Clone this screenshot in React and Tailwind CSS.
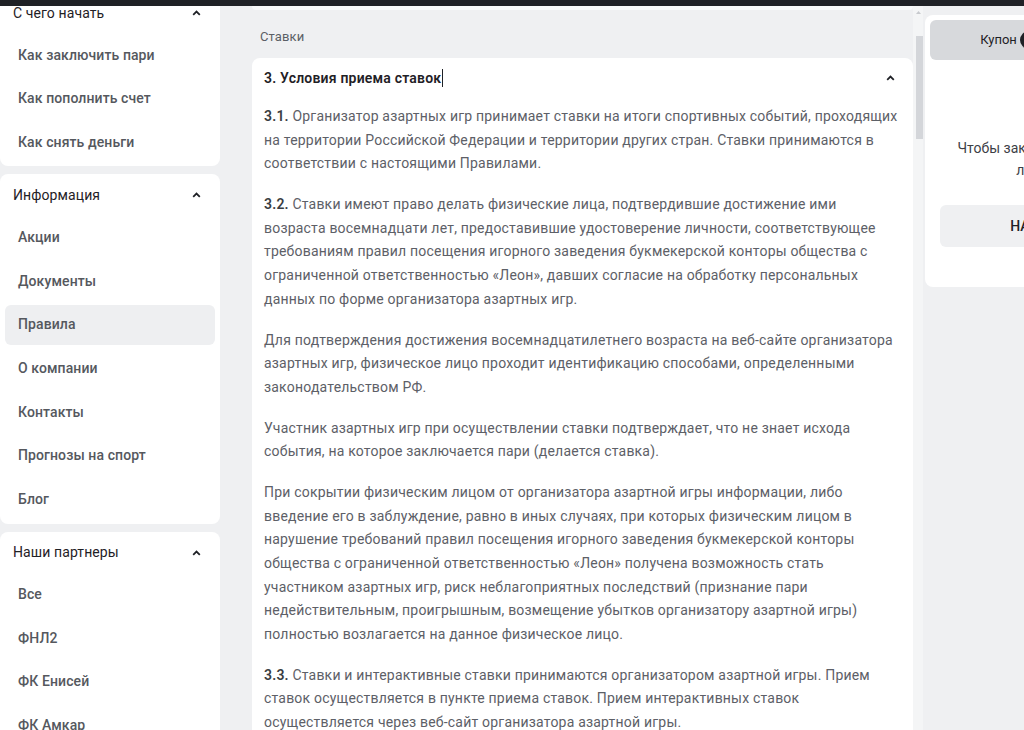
import React from "react";

const sections = [
  {
    title: "С чего начать",
    items: ["Как заключить пари", "Как пополнить счет", "Как снять деньги"],
  },
  {
    title: "Информация",
    items: ["Акции", "Документы", "Правила", "О компании", "Контакты", "Прогнозы на спорт", "Блог"],
    active: "Правила",
  },
  {
    title: "Наши партнеры",
    items: ["Все", "ФНЛ2", "ФК Енисей", "ФК Амкар", "ФК Тамбов"],
  },
];

// each paragraph is kept as its printed lines
const paragraphs = [
  {
    num: "3.1.",
    lines: [
      "Организатор азартных игр принимает ставки на итоги спортивных событий, проходящих",
      "на территории Российской Федерации и территории других стран. Ставки принимаются в",
      "соответствии с настоящими Правилами.",
    ],
  },
  {
    num: "3.2.",
    lines: [
      "Ставки имеют право делать физические лица, подтвердившие достижение ими",
      "возраста восемнадцати лет, предоставившие удостоверение личности, соответствующее",
      "требованиям правил посещения игорного заведения букмекерской конторы общества с",
      "ограниченной ответственностью «Леон», давших согласие на обработку персональных",
      "данных по форме организатора азартных игр.",
    ],
  },
  {
    lines: [
      "Для подтверждения достижения восемнадцатилетнего возраста на веб-сайте организатора",
      "азартных игр, физическое лицо проходит идентификацию способами, определенными",
      "законодательством РФ.",
    ],
  },
  {
    lines: [
      "Участник азартных игр при осуществлении ставки подтверждает, что не знает исхода",
      "события, на которое заключается пари (делается ставка).",
    ],
  },
  {
    lines: [
      "При сокрытии физическим лицом от организатора азартной игры информации, либо",
      "введение его в заблуждение, равно в иных случаях, при которых физическим лицом в",
      "нарушение требований правил посещения игорного заведения букмекерской конторы",
      "общества с ограниченной ответственностью «Леон» получена возможность стать",
      "участником азартных игр, риск неблагоприятных последствий (признание пари",
      "недействительным, проигрышным, возмещение убытков организатору азартной игры)",
      "полностью возлагается на данное физическое лицо.",
    ],
  },
  {
    num: "3.3.",
    lines: [
      "Ставки и интерактивные ставки принимаются организатором азартной игры. Прием",
      "ставок осуществляется в пункте приема ставок. Прием интерактивных ставок",
      "осуществляется через веб-сайт организатора азартной игры.",
    ],
  },
  {
    num: "3.4.",
    lines: ["Ставки принимаются только от лиц, прошедших идентификацию."],
  },
];

function ChevronUp() {
  return (
    <svg width="9" height="6" viewBox="0 0 9 6" fill="none">
      <path d="M1.2 4.8L4.5 1.6L7.8 4.8" stroke="#1f2126" strokeWidth="1.8" />
    </svg>
  );
}

function SideCard({ title, items, active }) {
  return (
    <div className="bg-white rounded-lg px-[5px] pb-1">
      <div className="h-[42px] flex items-center justify-between pl-2 pr-[14px] text-[14px] tracking-[0.1px] text-[#1f2126]">
        <span>{title}</span>
        <ChevronUp />
      </div>
      <div className="mt-[1px] flex flex-col gap-[3.7px]">
        {items.map((item) => (
          <div
            key={item}
            className={
              "h-10 flex items-center pl-[13px] rounded-md text-[14px] tracking-[0.1px] font-medium text-[#55585e] " +
              (item === active ? "bg-[#eeeff1]" : "")
            }
          >
            {item}
          </div>
        ))}
      </div>
    </div>
  );
}

export default function App() {
  return (
    <div className="h-[730px] w-[1024px] overflow-hidden bg-[#eff0f2] font-['Roboto','Liberation_Sans',sans-serif]">
      <div className="relative z-10 h-[6px] bg-[#1f2126]" />

      <div className="flex items-start h-[724px]">
        {/* left navigation */}
        <aside className="w-[220px] shrink-0 flex flex-col gap-2 -mt-[14px]">
          {sections.map((s) => (
            <SideCard key={s.title} {...s} />
          ))}
        </aside>

        {/* rules content */}
        <main className="ml-8 w-[661px] shrink-0">
          <div className="h-1 bg-[#f8f9fa] rounded-b-md" />
          <div className="h-[48px] pt-[6px] flex items-center pl-2 text-[13px] tracking-[0.1px] text-[#5b5f66]">Ставки</div>
          <div className="bg-white rounded-t-lg">
            <div className="h-10 flex items-center justify-between pl-3 pr-[18px]">
              <div className="flex items-center text-[14px] tracking-[0.2px] font-semibold text-[#1f2126]">
                3. Условия приема ставок
                <span className="ml-[1px] w-px h-[18px] bg-[#1f2126]" />
              </div>
              <ChevronUp />
            </div>
            <div className="px-3 pt-[7px] flex flex-col gap-[17.4px] text-[14px] leading-[23.6px] tracking-[0.2px] text-[#5d6067] whitespace-nowrap">
              {paragraphs.map((p, i) => (
                <p key={i}>
                  {p.lines.map((line, j) => (
                    <React.Fragment key={j}>
                      {j === 0 && p.num && <span className="font-semibold text-[#3a3d42]">{p.num} </span>}
                      {line}
                      {j < p.lines.length - 1 && <br />}
                    </React.Fragment>
                  ))}
                </p>
              ))}
            </div>
          </div>
        </main>

        {/* scrollbar */}
        <div className="w-[10px] shrink-0 self-stretch bg-[#f4f5f6] flex flex-col items-center">
          <svg width="7" height="5" viewBox="0 0 7 5" className="mt-[4px]">
            <path d="M3.5 1L6 4H1Z" fill="#c7c9cd" />
          </svg>
          <div className="mt-[21px] ml-[2px] w-[7px] h-[103px] bg-[#d4d6da]" />
        </div>

        {/* coupon */}
        <aside className="ml-[2px] mt-[9px] w-[290px] shrink-0 bg-white rounded-lg p-[5px] pb-10">
          <div className="flex">
            <div className="w-[158px] h-10 rounded-md bg-[#d7d9dc] flex items-center justify-center gap-[3px] text-[13px] text-[#1f2126]">
              Купон
              <span className="w-[18px] h-[18px] rounded-full bg-[#1f2126] text-white text-[11px] flex items-center justify-center">0</span>
            </div>
            <div className="flex-1 h-10 flex items-center justify-center text-[13px] text-[#5b5f66]">Мои ставки</div>
          </div>
          <p className="mt-[77px] px-5 text-center text-[14px] leading-[22px] text-[#3d4046]">
            Чтобы заключить пари, войдите в личный кабинет
          </p>
          <div className="mt-6 ml-[10px] mr-5 h-[42px] rounded-md bg-[#eff0f2] flex items-center justify-center text-[14px] font-medium uppercase text-[#1f2126]">
            Начать играть
          </div>
        </aside>
      </div>
    </div>
  );
}
